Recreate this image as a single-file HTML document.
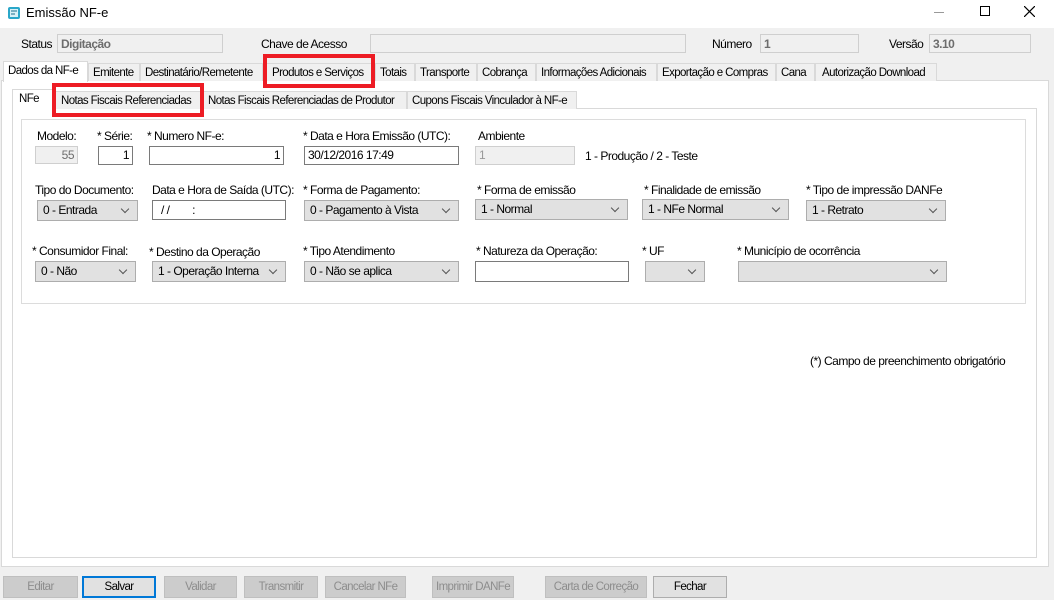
<!DOCTYPE html>
<html><head><meta charset="utf-8"><style>
*{margin:0;padding:0;box-sizing:border-box;white-space:nowrap}
html,body{width:1054px;height:600px;overflow:hidden}
body{background:#f0f0f0;font-family:"Liberation Sans",sans-serif;font-size:12px;color:#000;position:relative;letter-spacing:-0.5px}
.a{position:absolute}
.box{position:absolute;border:1px solid #7a7a7a;background:#fff}
.dis{position:absolute;border:1px solid #cfcfcf;background:#f0f0f0;color:#6d6d6d}
.cb{position:absolute;border:1px solid #adadad;background:#e1e1e1;padding:2px 0 0 5px;line-height:14px;overflow:hidden}
.cb:after{content:"";position:absolute;right:9px;top:5px;width:5px;height:5px;border-right:1px solid #555;border-bottom:1px solid #555;transform:rotate(45deg)}
.tab{position:absolute;top:63px;height:18px;border:1px solid #d9d9d9;border-bottom:none;background:#f0f0f0;padding:2px 0 0 4px;line-height:14px;overflow:hidden;font-size:11.5px;letter-spacing:-0.6px}
.itab{position:absolute;top:91px;height:18px;border:1px solid #d9d9d9;border-bottom:none;background:#f0f0f0;padding:2px 0 0 4px;line-height:14px;overflow:hidden;font-size:11.5px;letter-spacing:-0.6px}
.btn{position:absolute;top:576px;height:22px;border:1px solid #bfbfbf;background:#cccccc;color:#8d8d8d;text-align:center;line-height:20px;overflow:hidden;font-size:11.5px;letter-spacing:-0.6px}
.red{position:absolute;border:4px solid #ed1c24}
.lbl{position:absolute;line-height:14px}
</style></head><body>
<div class="a" style="left:0;top:0;width:1054px;height:28px;background:#fff"></div>
<svg class="a" style="left:7px;top:5px" width="14" height="16" viewBox="0 0 14 16"><rect x="1" y="2" width="12" height="12" rx="2" fill="#2aa7c9"/><rect x="3" y="4" width="8" height="8" fill="#d9f1f7"/><path d="M4 6h6M4 9h4" stroke="#1a6f8c"/></svg>
<div class="a" style="left:26px;top:5px;font-size:13px;letter-spacing:0">Emissão NF-e</div>
<div class="a" style="left:934px;top:12px;width:10px;height:1px;background:#999"></div>
<div class="a" style="left:980px;top:6px;width:10px;height:10px;border:1px solid #000"></div>
<svg class="a" style="left:1024px;top:6px" width="11" height="11"><path d="M0 0L11 11M11 0L0 11" stroke="#000" stroke-width="1.2"/></svg>

<div class="lbl" style="left:21px;top:37px">Status</div>
<div class="dis" style="left:57px;top:34px;width:166px;height:19px;font-weight:bold;padding:2px 3px;color:#6d6d6d">Digitação</div>
<div class="lbl" style="left:261px;top:37px">Chave de Acesso</div>
<div class="dis" style="left:370px;top:34px;width:316px;height:19px"></div>
<div class="lbl" style="left:712px;top:37px">Número</div>
<div class="dis" style="left:760px;top:34px;width:99px;height:19px;font-weight:bold;padding:2px 3px">1</div>
<div class="lbl" style="left:889px;top:37px">Versão</div>
<div class="dis" style="left:929px;top:34px;width:102px;height:19px;font-weight:bold;padding:2px 3px">3.10</div>

<div class="a" style="left:1px;top:80px;width:1048px;height:487px;background:#fff;border:1px solid #d9d9d9"></div>
<div class="tab" style="left:88px;width:52px">Emitente</div>
<div class="tab" style="left:140px;width:123px">Destinatário/Remetente</div>
<div class="tab" style="left:263px;width:112px;padding-left:8px">Produtos e Serviços</div>
<div class="tab" style="left:375px;width:40px">Totais</div>
<div class="tab" style="left:415px;width:62px">Transporte</div>
<div class="tab" style="left:477px;width:59px">Cobrança</div>
<div class="tab" style="left:536px;width:121px">Informações Adicionais</div>
<div class="tab" style="left:657px;width:119px">Exportação e Compras</div>
<div class="tab" style="left:776px;width:39px">Cana</div>
<div class="tab" style="left:815px;width:122px;padding-left:6px">Autorização Download</div>
<div class="tab" style="left:3px;top:61px;width:85px;height:21px;background:#fff;border-color:#d9d9d9">Dados da NF-e</div>

<div class="a" style="left:12px;top:108px;width:1025px;height:450px;background:#fff;border:1px solid #d9d9d9"></div>
<div class="itab" style="left:53px;width:150px;padding-left:7px">Notas Fiscais Referenciadas</div>
<div class="itab" style="left:203px;width:204px">Notas Fiscais Referenciadas de Produtor</div>
<div class="itab" style="left:407px;width:170px">Cupons Fiscais Vinculador à NF-e</div>
<div class="itab" style="left:12px;top:89px;width:41px;height:21px;background:#fff;padding-left:6px">NFe</div>

<div class="a" style="left:21px;top:119px;width:1005px;height:185px;border:1px solid #dcdcdc"></div>

<div class="lbl" style="left:37px;top:129px">Modelo:</div>
<div class="dis" style="left:35px;top:146px;width:43px;height:18px;text-align:right;padding:1px 3px">55</div>
<div class="lbl" style="left:97px;top:129px">* Série:</div>
<div class="box" style="left:98px;top:146px;width:35px;height:19px;text-align:right;padding:1px 3px">1</div>
<div class="lbl" style="left:147px;top:129px">* Numero NF-e:</div>
<div class="box" style="left:149px;top:146px;width:135px;height:19px;text-align:right;padding:1px 3px">1</div>
<div class="lbl" style="left:303px;top:129px">* Data e Hora Emissão (UTC):</div>
<div class="box" style="left:304px;top:146px;width:155px;height:19px;padding:1px 3px">30/12/2016 17:49</div>
<div class="lbl" style="left:478px;top:129px">Ambiente</div>
<div class="dis" style="left:475px;top:146px;width:100px;height:19px;padding:1px 3px;color:#999">1</div>
<div class="lbl" style="left:585px;top:149px">1 - Produção / 2 - Teste</div>

<div class="lbl" style="left:35px;top:183px">Tipo do Documento:</div>
<div class="cb" style="left:37px;top:200px;width:101px;height:21px">0 - Entrada</div>
<div class="lbl" style="left:152px;top:183px">Data e Hora de Saída (UTC):</div>
<div class="box" style="left:152px;top:200px;width:134px;height:20px;padding:2px 8px">/ /&nbsp;&nbsp;&nbsp;&nbsp;&nbsp;&nbsp;&nbsp;&nbsp;:</div>
<div class="lbl" style="left:303px;top:183px">* Forma de Pagamento:</div>
<div class="cb" style="left:304px;top:200px;width:155px;height:21px">0 - Pagamento à Vista</div>
<div class="lbl" style="left:477px;top:183px">* Forma de emissão</div>
<div class="cb" style="left:475px;top:199px;width:153px;height:21px">1 - Normal</div>
<div class="lbl" style="left:644px;top:183px">* Finalidade de emissão</div>
<div class="cb" style="left:642px;top:199px;width:147px;height:21px">1 - NFe Normal</div>
<div class="lbl" style="left:806px;top:183px">* Tipo de impressão DANFe</div>
<div class="cb" style="left:806px;top:200px;width:140px;height:21px">1 - Retrato</div>

<div class="lbl" style="left:32px;top:244px">* Consumidor Final:</div>
<div class="cb" style="left:35px;top:261px;width:101px;height:21px">0 - Não</div>
<div class="lbl" style="left:149px;top:245px">* Destino da Operação</div>
<div class="cb" style="left:152px;top:261px;width:134px;height:21px">1 - Operação Interna</div>
<div class="lbl" style="left:303px;top:244px">* Tipo Atendimento</div>
<div class="cb" style="left:304px;top:261px;width:155px;height:21px">0 - Não se aplica</div>
<div class="lbl" style="left:476px;top:244px">* Natureza da Operação:</div>
<div class="box" style="left:475px;top:261px;width:154px;height:21px"></div>
<div class="lbl" style="left:642px;top:244px">* UF</div>
<div class="cb" style="left:645px;top:261px;width:60px;height:21px"></div>
<div class="lbl" style="left:737px;top:244px">* Município de ocorrência</div>
<div class="cb" style="left:738px;top:261px;width:209px;height:21px"></div>

<div class="lbl" style="left:810px;top:354px">(*) Campo de preenchimento obrigatório</div>

<div class="red" style="left:263px;top:54px;width:112px;height:34px"></div>
<div class="red" style="left:52px;top:83px;width:152px;height:34px"></div>

<div class="btn" style="left:3px;width:75px">Editar</div>
<div class="btn" style="left:82px;width:74px;background:#e1e1e1;border:2px solid #0078d7;color:#000;line-height:18px">Salvar</div>
<div class="btn" style="left:164px;width:73px">Validar</div>
<div class="btn" style="left:244px;width:74px">Transmitir</div>
<div class="btn" style="left:325px;width:81px">Cancelar NFe</div>
<div class="btn" style="left:432px;width:82px">Imprimir DANFe</div>
<div class="btn" style="left:545px;width:102px">Carta de Correção</div>
<div class="btn" style="left:653px;width:74px;background:#e1e1e1;border-color:#adadad;color:#000">Fechar</div>
</body></html>
